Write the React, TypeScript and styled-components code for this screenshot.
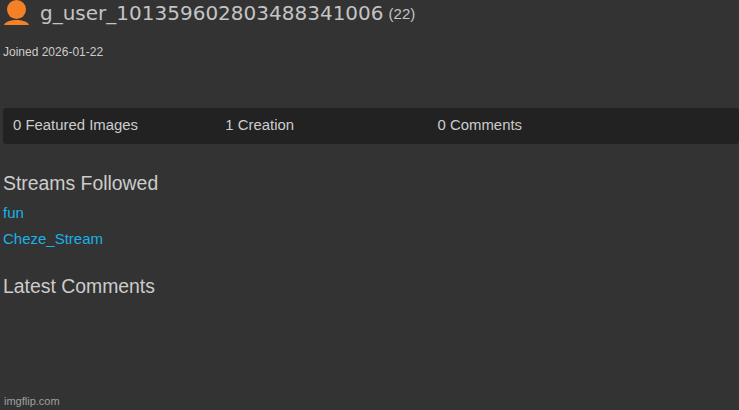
import styled, { createGlobalStyle } from "styled-components";

const GlobalStyle = createGlobalStyle`
  html, body {
    margin: 0;
    padding: 0;
    height: 100%;
    background: #333333;
    overflow: hidden;
  }
`;

const Page = styled.div`
  position: relative;
  height: 410px;
  padding-left: 3px;
  box-sizing: border-box;
  font-family: "Liberation Sans", Arial, sans-serif;
  color: #cccccc;
`;

const UserHeader = styled.div`
  display: flex;
  align-items: center;
  height: 26px;
`;

const Avatar = styled.svg`
  width: 26px;
  height: 26px;
  margin-right: 11px;
  flex-shrink: 0;
`;

const UserName = styled.span`
  font-family: "DejaVu Sans", Verdana, sans-serif;
  font-size: 20px;
  color: #c4c4c4;
`;

const Points = styled.span`
  font-size: 15px;
  margin-left: 5px;
  color: #c4c4c4;
`;

const Joined = styled.div`
  margin-top: 20px;
  font-size: 12px;
  line-height: 13px;
  color: #cccccc;
`;

const StatsBar = styled.div`
  display: flex;
  align-items: center;
  height: 36px;
  margin-top: 49px;
  padding: 0 0 2px 10px;
  box-sizing: border-box;
  background: #222222;
  border-radius: 3px;
`;

const Stat = styled.div`
  width: 212.3px;
  font-size: 14.9px;
  color: #cccccc;
`;

const SectionTitle = styled.div<{ $gap: number }>`
  margin-top: ${(props) => props.$gap}px;
  font-size: 19.4px;
  line-height: 23px;
  color: #cccccc;
`;

const StreamList = styled.div`
  display: flex;
  flex-direction: column;
  gap: 9px;
  margin-top: 9px;
`;

const StreamLink = styled.a`
  font-size: 15px;
  line-height: 17px;
  color: #1ab2e6;
  text-decoration: none;
`;

const Watermark = styled.div`
  position: absolute;
  left: 4px;
  bottom: 2px;
  font-size: 11px;
  line-height: 13px;
  color: #a0a0a0;
`;

export default function App() {
  return (
    <Page>
      <GlobalStyle />
      <UserHeader>
        <Avatar viewBox="0 0 26 26">
          <circle cx="13.5" cy="9.5" r="9.5" fill="#f58025" />
          <path d="M1 25 C2 21.5 8 20 13.5 20 C19 20 25 21.5 26 25 Z" fill="#f58025" />
        </Avatar>
        <UserName>g_user_101359602803488341006</UserName>
        <Points>(22)</Points>
      </UserHeader>
      <Joined>Joined 2026-01-22</Joined>
      <StatsBar>
        <Stat>0 Featured Images</Stat>
        <Stat>1 Creation</Stat>
        <Stat>0 Comments</Stat>
      </StatsBar>
      <SectionTitle $gap={28}>Streams Followed</SectionTitle>
      <StreamList>
        <StreamLink href="#">fun</StreamLink>
        <StreamLink href="#">Cheze_Stream</StreamLink>
      </StreamList>
      <SectionTitle $gap={28}>Latest Comments</SectionTitle>
      <Watermark>imgflip.com</Watermark>
    </Page>
  );
}
